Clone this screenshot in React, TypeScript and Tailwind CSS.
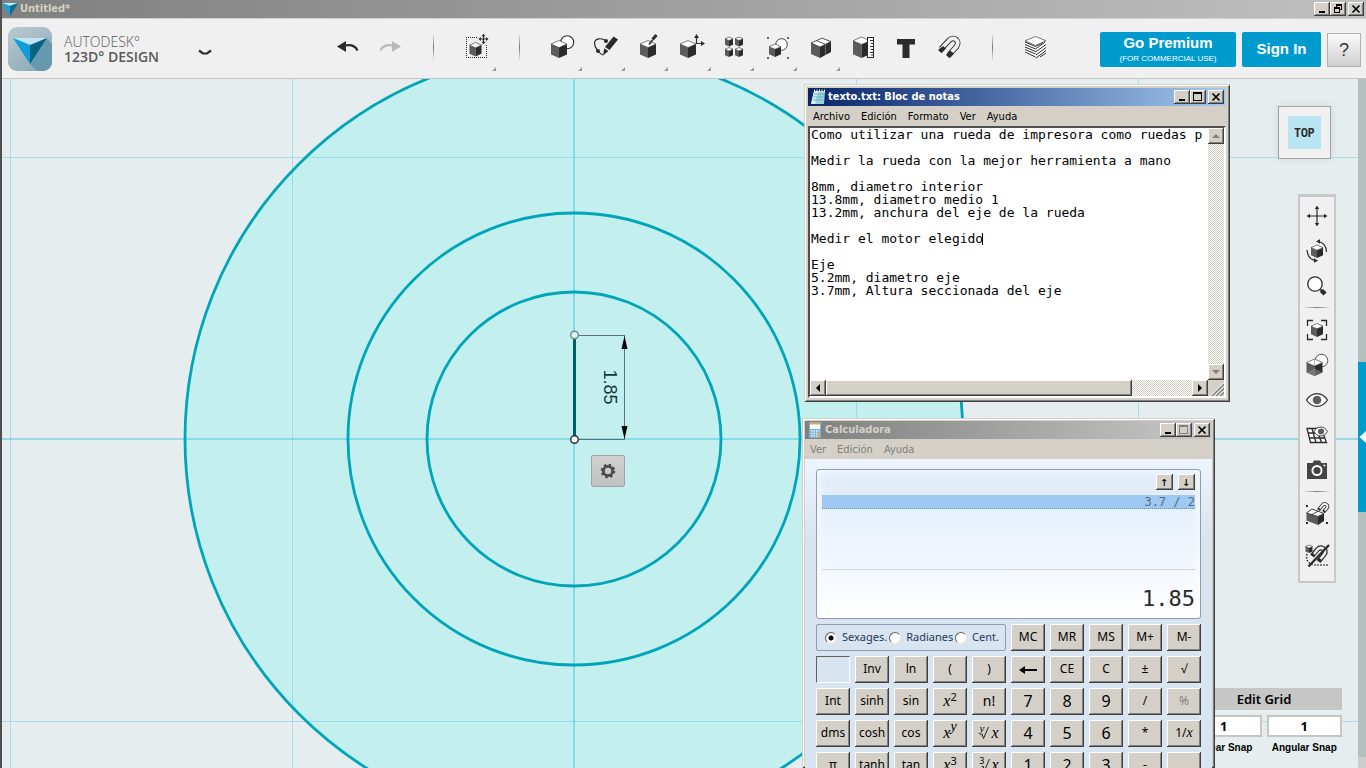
import React from "react";

const INK = "#2b2b2b";

/* ---------- drawing helpers ---------- */

function Cube({ x, y, w, h }: { x: number; y: number; w: number; h: number }) {
  const m = x + w / 2;
  const q = w * 0.22;
  const b = y + h;
  return (
    <g>
      <polygon points={`${x},${y + q} ${m},${y + 2 * q} ${m},${b} ${x},${b - q}`} fill="#5c5c5c" />
      <polygon points={`${x + w},${y + q} ${m},${y + 2 * q} ${m},${b} ${x + w},${b - q}`} fill={INK} />
      <polygon
        points={`${m},${y} ${x + w},${y + q} ${m},${y + 2 * q} ${x},${y + q}`}
        fill="#fff"
        stroke={INK}
        strokeWidth="0.6"
        strokeLinejoin="round"
      />
    </g>
  );
}

function Icon({ children }: { children: React.ReactNode }) {
  return (
    <svg width="33" height="32" viewBox="0 0 33 32" aria-hidden="true">
      {children}
    </svg>
  );
}

const SelectIcon = () => (
  <Icon>
    <path d="M6 6.500H18M6.500 8V27M8 26.500H27M26.500 14V26" stroke={INK} strokeWidth="1" strokeDasharray="1 1" fill="none" shapeRendering="crispEdges" />
    <Cube x={9.500} y={11.500} w={12} h={14} />
    <path d="M23.500 4.500V11.500M20 8H27" stroke={INK} strokeWidth="1.200" />
    <path d="M23.500 2.800l2 2.400h-4zM23.500 13.200l2-2.400h-4zM18.500 8l2.400-2v4zM28.500 8l-2.400-2v4z" fill={INK} />
  </Icon>
);

const PrimitivesIcon = () => (
  <Icon>
    <circle cx="21.200" cy="11.200" r="6.500" fill="#fff" stroke={INK} strokeWidth="1.100" />
    <Cube x={5} y={9.500} w={16} h={17.500} />
  </Icon>
);

const SketchIcon = () => (
  <Icon>
    <path d="M17 10C13 6.500 5.500 7 5.500 12.500C5.500 16 7.500 18 9 20C10.500 22 12 23.500 14 24" stroke={INK} strokeWidth="1.200" fill="none" />
    <circle cx="17" cy="10" r="2" fill={INK} />
    <circle cx="9" cy="20" r="2" fill={INK} />
    <path d="M24.500 5.500l4.500 3-8.500 10.500-4.500-3z" fill={INK} />
    <path d="M15.200 17.200l4.200 2.800-5.400 4.600z" fill={INK} />
  </Icon>
);

const ConstructIcon = () => (
  <Icon>
    <Cube x={8} y={9.500} w={16} h={17.500} />
    <path d="M20.500 8.500L24.500 4" stroke={INK} strokeWidth="3" />
    <path d="M17 13.500L20.500 9" stroke={INK} strokeWidth="1.600" />
  </Icon>
);

const TransformIcon = () => (
  <Icon>
    <Cube x={5} y={9.500} w={16} h={17.500} />
    <path d="M21.500 6V12.500H27" stroke={INK} strokeWidth="1.200" fill="none" />
    <path d="M21.500 3l2.500 4h-5zM30 12.500l-4-2.500v5z" fill={INK} />
  </Icon>
);

const PatternIcon = () => (
  <Icon>
    <Cube x={7} y={6} w={8} h={9.500} />
    <Cube x={17} y={6} w={8} h={9.500} />
    <Cube x={7} y={16.500} w={8} h={9.500} />
    <Cube x={17} y={16.500} w={8} h={9.500} />
  </Icon>
);

const GroupIcon = () => (
  <Icon>
    <path d="M6 6h2v2h-2zM26 6h2v2h-2zM6 26h2v2h-2zM26 26h2v2h-2z" fill="#666" />
    <circle cx="20.500" cy="13.500" r="5.800" fill="#fff" stroke={INK} strokeWidth="0.900" />
    <Cube x={8} y={13} w={12} h={13} />
  </Icon>
);

const CombineIcon = () => (
  <Icon>
    <polygon points="7,12 16,16 16,27 7,23" fill="#5c5c5c" />
    <polygon points="16,16 27,10.500 27,21 16,27" fill={INK} />
    <path d="M7 12L18 7.200L27 10.500L16 16Z" fill="#fff" stroke={INK} strokeWidth="0.800" />
    <path d="M12.500 9.700L21.500 13.300" stroke={INK} strokeWidth="0.800" />
    <path d="M21.500 13.200V24" stroke="#8a8a8a" strokeWidth="0.700" />
  </Icon>
);

const MeasureIcon = () => (
  <Icon>
    <Cube x={6} y={6} w={17} h={21} />
    <rect x="20.500" y="6.500" width="6" height="20" fill="#fff" stroke={INK} strokeWidth="1" />
    <path d="M23 9.500h3M24 12.500h2M23 15.500h3M24 18.500h2M23 21.500h3M24 24h2" stroke={INK} strokeWidth="1.200" />
  </Icon>
);

const TextIcon = () => (
  <Icon>
    <path d="M7 8h18v5.500h-5.500v13.500h-7v-13.500h-5.500z" fill={INK} />
  </Icon>
);

const MagnetIcon = () => (
  <Icon>
    <path d="M8 18L16.500 9C20.500 5 27.500 9.500 23.500 15.500L16 24" stroke={INK} strokeWidth="5.600" fill="none" />
    <path d="M8 18L16.500 9C20.500 5 27.500 9.500 23.500 15.500L16 24" stroke="#f0f0f0" strokeWidth="3.800" fill="none" />
    <path d="M10 15L5 19l3.500 3.200L13 17.500zM17 19.500L13 24l3.500 3.200L21 22.500z" fill={INK} />
  </Icon>
);

const LayersIcon = () => (
  <Icon>
    <path d="M6 10L16.500 14.500L27 10V22L16.500 27L6 22Z" fill="#fff" />
    <path
      d="M6 11L16.500 15.500M6 13.500L16.500 18M6 16L16.500 20.500M6 18.500L16.500 23M6 21L16.500 26M16.500 18L26 11M16.500 21L27 13.500M17 24L27 16.500M17 27L27 19.500M21 26L27 22M16.500 15.500L24 11.500"
      stroke={INK}
      strokeWidth="1"
      fill="none"
    />
    <path d="M16.500 5.500L27 9.800L16.500 14.500L6 9.800Z" fill="#fff" stroke="#555" strokeWidth="0.800" />
  </Icon>
);

const UndoIcon = ({ color }: { color: string }) => (
  <Icon>
    <path d="M6 15.500L15 10V21Z" fill={color} />
    <path d="M14 14.500C20 13.500 24.500 15 26.500 19.500" stroke={color} strokeWidth="2.200" fill="none" />
  </Icon>
);

const RedoIcon = ({ color }: { color: string }) => (
  <Icon>
    <path d="M27 15.500L18 10V21Z" fill={color} />
    <path d="M19 14.500C13 13.500 8.500 15 6.500 19.500" stroke={color} strokeWidth="2.200" fill="none" />
  </Icon>
);

/* ---------- navigation bar icons (26 x 26) ---------- */

function NavIcon({ children }: { children: React.ReactNode }) {
  return (
    <svg width="26" height="26" viewBox="0 0 26 26" aria-hidden="true">
      {children}
    </svg>
  );
}

const PanIcon = () => (
  <NavIcon>
    <path d="M13 4V22M4 13H22" stroke={INK} strokeWidth="1.200" />
    <path d="M13 2.500l2.200 3.500h-4.400zM13 23.500l2.200-3.500h-4.400zM2.500 13l3.500-2.200v4.400zM23.500 13l-3.500-2.200v4.400z" fill={INK} />
  </NavIcon>
);
const OrbitIcon = () => (
  <NavIcon>
    <Cube x={7} y={7} w={12} h={13} />
    <path d="M14 3.500C19 4 22.500 8 22.500 14M12 22.500C7 22 3.500 18 3 12" stroke={INK} strokeWidth="1.200" fill="none" />
    <path d="M12 3.200l4-2v4.500zM14 22.800l-4 2v-4.500z" fill={INK} />
  </NavIcon>
);
const ZoomIcon = () => (
  <NavIcon>
    <circle cx="11" cy="11" r="7.200" fill="#fff" stroke={INK} strokeWidth="1.300" />
    <path d="M16.500 16.500L18 18" stroke={INK} strokeWidth="2" />
    <path d="M17.500 17.500L21 21" stroke={INK} strokeWidth="4.500" />
  </NavIcon>
);
const FitIcon = () => (
  <NavIcon>
    <path d="M3.500 9V3.500H9M17 3.500H22.500V9M22.500 17V22.500H17M9 22.500H3.500V17" stroke={INK} strokeWidth="1.300" fill="none" />
    <Cube x={7} y={6.500} w={12} h={13.500} />
  </NavIcon>
);
const MaterialIcon = () => (
  <NavIcon>
    <circle cx="17.500" cy="8.500" r="6.300" fill="#fff" stroke={INK} strokeWidth="0.800" />
    <Cube x={2.500} y={7} w={16} h={17} />
    <path d="M2.500 20.500L10.500 16.500V24ZM10.500 16.500L18.500 20.500L10.500 24Z" fill="#8b8b8b" opacity="0.600" />
    <path d="M10.500 14V7.500" stroke="#999" strokeWidth="0.700" />
  </NavIcon>
);
const EyeIcon = () => (
  <NavIcon>
    <path d="M2.500 13C8 4.500 18 4.500 23.500 13C18 21.500 8 21.500 2.500 13Z" fill="#fff" stroke={INK} strokeWidth="1.200" />
    <circle cx="13" cy="13" r="4.300" fill="#5c5c5c" />
  </NavIcon>
);
const GridEyeIcon = () => (
  <NavIcon>
    <path d="M3 6.500H17L22.500 20.500H6.500Z" fill="#fff" stroke={INK} strokeWidth="1.300" />
    <path d="M4 11H19M5.500 16H21M8 6.500L12 20.500M12.500 6.500L17.500 20.500" stroke={INK} strokeWidth="1.300" />
    <path d="M10 9.500C13 3.500 20 3.500 23.500 9.500C20 15.500 13 15.500 10 9.500Z" fill="#fff" stroke={INK} strokeWidth="0.900" />
    <circle cx="17" cy="9.500" r="3" fill="#5c5c5c" />
  </NavIcon>
);
const CameraIcon = () => (
  <NavIcon>
    <path d="M3 6H8.500L10 3.500H16L17.500 6H23V22H3Z" fill="#444" />
    <circle cx="13" cy="13.500" r="5.500" fill="#fff" />
    <circle cx="13" cy="13.500" r="3.600" fill="#444" />
    <circle cx="20.500" cy="8.500" r="1" fill="#fff" />
  </NavIcon>
);
const SnapIcon = () => (
  <NavIcon>
    <path d="M2 4h2v2h-2zM2 21h2v2h-2zM22 21h2v2h-2z" fill={INK} />
    <polygon points="2.500,12 14,15.500 14,24 2.500,19.500" fill="#5c5c5c" />
    <polygon points="14,15.500 20,12.500 20,20 14,24" fill={INK} />
    <path d="M2.500 12L8 8L20 12.500L14 15.500Z" fill="#fff" stroke={INK} strokeWidth="0.900" />
    <path d="M8 13.500L14 10.200" stroke={INK} strokeWidth="0.900" />
    <path d="M14.500 9L18.500 4C20.500 1.500 25 4 23 7L19.500 11" stroke={INK} strokeWidth="3.600" fill="none" />
    <path d="M15.700 7.500L18.500 4C20.500 1.500 25 4 23 7L20.700 9.700" stroke="#f0f0f0" strokeWidth="2" fill="none" />
  </NavIcon>
);
const SnapOffIcon = () => (
  <NavIcon>
    <Cube x={1.500} y={2} w={7} h={8} />
    <path d="M3 11C1 18 6 22 12 22H24" stroke={INK} strokeWidth="1.500" strokeDasharray="1.500 1.500" fill="none" />
    <path d="M8 13L13.500 6.500C17 3 23 6 20.500 11L14.500 18.500" stroke={INK} strokeWidth="5" fill="none" />
    <path d="M10 11L13.500 6.500C17 3 23 6 20.500 11L16.500 16" stroke="#f0f0f0" strokeWidth="2.600" fill="none" />
    <path d="M4.500 23.500L25 2" stroke={INK} strokeWidth="2.400" />
  </NavIcon>
);

/* ---------- classic window chrome ---------- */

const RAISED =
  "bg-[#d4d0c8] shadow-[inset_-1px_-1px_0_#404040,inset_1px_1px_0_#ffffff,inset_-2px_-2px_0_#808080]";

function CaptionButtons({ middle, dim = false }: { middle: "max" | "restore"; dim?: boolean }) {
  const c = "flex h-[14px] w-4 items-center justify-center " + RAISED;
  return (
    <div className="flex shrink-0">
      <button aria-label="Minimizar" className={c}>
        <svg width="12" height="10" viewBox="0 0 12 10"><path d="M3 7h6v2H3z" fill="#000" /></svg>
      </button>
      <button aria-label="Maximizar" className={c}>
        {middle === "max" ? (
          <svg width="12" height="10" viewBox="0 0 12 10">
            <path d="M1 0h9v9H1zM2 2v6h7V2z" fillRule="evenodd" fill={dim ? "#808080" : "#000"} />
          </svg>
        ) : (
          <svg width="12" height="10" viewBox="0 0 12 10">
            <path d="M4 0h6v6H8V9H2V3h2zM5 2v1h3v2h1V2zM3 5v3h4V5z" fillRule="evenodd" fill="#000" />
          </svg>
        )}
      </button>
      <button aria-label="Cerrar" className={c + " ml-[2px]"}>
        <svg width="12" height="10" viewBox="0 0 12 10"><path d="M2.500 1.500l7 7M9.500 1.500l-7 7" stroke="#000" strokeWidth="1.700" /></svg>
      </button>
    </div>
  );
}

const FRAME =
  "bg-[#d4d0c8] shadow-[inset_1px_1px_0_#d4d0c8,inset_-1px_-1px_0_#404040,inset_2px_2px_0_#ffffff,inset_-2px_-2px_0_#808080]";

/* ---------- application header ---------- */

function BrandMark({ size }: { size: "sm" | "lg" }) {
  if (size === "sm") {
    return (
      <svg width="16" height="14" viewBox="0 0 16 14" aria-hidden="true">
        <path d="M0 1H16L8 4Z" fill="#c3e9f7" />
        <path d="M0 1L8 4V14Z" fill="#12a5dc" />
        <path d="M16 1L8 4V14Z" fill="#0a6c96" />
      </svg>
    );
  }
  return (
    <svg width="44" height="44" viewBox="0 0 44 44" aria-hidden="true">
      <defs>
        <linearGradient id="brand" x1="0" y1="0" x2="0.600" y2="1">
          <stop offset="0" stopColor="#bccad2" />
          <stop offset="1" stopColor="#8fabba" />
        </linearGradient>
      </defs>
      <rect width="44" height="44" rx="9" fill="url(#brand)" />
      <path d="M38.500 11L44 17V35A9 9 0 0 1 35 44H29L22 37Z" fill="#6499ae" />
      <path d="M5 11H39L22 18Z" fill="#bfe8f7" />
      <path d="M5 11L22 18V37Z" fill="#0d9fd8" />
      <path d="M39 11L22 18V37Z" fill="#0a6283" />
    </svg>
  );
}

const tools = [
  { name: "Primitives", icon: <PrimitivesIcon />, more: true },
  { name: "Sketch", icon: <SketchIcon />, more: true },
  { name: "Construct", icon: <ConstructIcon />, more: true },
  { name: "Modify", icon: <TransformIcon />, more: true },
  { name: "Pattern", icon: <PatternIcon />, more: true },
  { name: "Grouping", icon: <GroupIcon />, more: true },
  { name: "Combine", icon: <CombineIcon />, more: true },
  { name: "Measure", icon: <MeasureIcon />, more: false },
  { name: "Text", icon: <TextIcon />, more: false },
  { name: "Snap", icon: <MagnetIcon />, more: false },
];

function Tool({ name, more = false, children }: { name: string; more?: boolean; children: React.ReactNode }) {
  return (
    <button aria-label={name} className="relative flex h-14 w-[43px] shrink-0 items-center justify-center self-start">
      {children}
      {more && (
        <svg className="absolute bottom-1 right-[2px]" width="4" height="4" viewBox="0 0 4 4" aria-hidden="true">
          <path d="M4 0V4H0Z" fill="#999" />
        </svg>
      )}
    </button>
  );
}

const Divider = () => (
  <div className="flex h-14 w-[43px] shrink-0 items-center justify-center self-start">
    <div className="h-7 w-px bg-linear-to-b from-transparent via-[#777] to-transparent" />
  </div>
);

function Header() {
  return (
    <header className="shrink-0">
      <div className="flex h-[18px] items-center gap-[2px] bg-linear-to-r from-[#808080] to-[#c0c0c0] pr-[2px]">
        <BrandMark size="sm" />
        <h1 className="grow font-['DejaVu_Sans_Condensed','DejaVu_Sans',sans-serif] text-[11px] font-bold leading-4 text-[#d4d0c8]">
          Untitled*
        </h1>
        <CaptionButtons middle="restore" />
      </div>
      <div className="flex h-[61px] items-center border-b border-t border-b-[#c4c4c4] border-t-[#d4d0c8] bg-[#f0f0f0]">
        <div className="flex w-[324px] shrink-0 items-center pl-[6px]">
          <BrandMark size="lg" />
          <div className="ml-3 w-[120px] font-['Open_Sans','Noto_Sans',sans-serif] text-[14px] leading-[15px] text-[#5a5a5a]">
            <div className="font-light">AUTODESK°</div>
            <div className="font-semibold">123D° DESIGN</div>
          </div>
          <button aria-label="Menu" className="ml-[9px] flex h-6 w-6 items-center justify-center pt-2">
            <svg width="14" height="7" viewBox="0 0 14 7"><path d="M1 1.500L5 4.500H9L13 1.500" stroke={INK} strokeWidth="2.200" fill="none" /></svg>
          </button>
        </div>
        <Tool name="Undo"><UndoIcon color={INK} /></Tool>
        <Tool name="Redo"><RedoIcon color="#b8b8b8" /></Tool>
        <Divider />
        <Tool name="Select" more><SelectIcon /></Tool>
        <Divider />
        {tools.map((t) => (
          <Tool key={t.name} name={t.name} more={t.more}>{t.icon}</Tool>
        ))}
        <Divider />
        <Tool name="Layers"><LayersIcon /></Tool>
        <div className="ml-auto flex items-center gap-[6px] pr-[5px] pt-[2px] font-['Liberation_Sans',Arial,sans-serif] text-white">
          <button className="flex h-[35px] w-[136px] flex-col items-center justify-center gap-[2px] rounded-[2px] bg-[#009bcd]">
            <span className="text-[15px] font-bold leading-4">Go Premium</span>
            <span className="text-[8px] leading-3">(FOR COMMERCIAL USE)</span>
          </button>
          <button className="h-[35px] w-[79px] rounded-[2px] bg-[#009bcd] text-[15px] font-bold">Sign In</button>
          <button aria-label="Help" className="h-[34px] w-[34px] border border-[#b0b0b0] bg-linear-to-b from-[#fafafa] to-[#cfcfcf] text-[18px] leading-6 text-[#333]">
            ?
          </button>
        </div>
      </div>
    </header>
  );
}

/* ---------- sketch canvas ---------- */

function Sketch() {
  const cx = 572;
  const cy = 360;
  return (
    <svg className="absolute inset-0 h-full w-full" aria-label="Sketch">
      <circle cx={cx} cy={cy} r="389" fill="#c3efef" />
      <g stroke="#3cbfe0" strokeWidth="1" opacity="0.350" shapeRendering="crispEdges">
        {[8.5, 290.5, 854.5, 1136.5].map((x) => <line key={x} x1={x} x2={x} y1="0" y2="100%" />)}
        {[78.5, 642.5].map((y) => <line key={y} x1="0" x2="100%" y1={y} y2={y} />)}
      </g>
      <g stroke="#3cc4e0" strokeWidth="1.500" opacity="0.600">
        <line x1={cx} x2={cx} y1="0" y2="100%" />
        <line x1="0" x2="100%" y1={cy} y2={cy} />
      </g>
      {[389, 226, 147].map((r) => (
        <circle key={r} cx={cx} cy={cy} r={r} fill="none" stroke="#00a5b8" strokeWidth="2.800" />
      ))}
      <g stroke="#5c7274" strokeWidth="1" shapeRendering="crispEdges">
        <path d="M576 256.500H623M576 360.500H623M622.500 257V360" />
      </g>
      <path d="M622.500 257l3 13h-6zM622.500 360l3-13h-6z" fill="#000" />
      <path d={`M${cx + 0.5} 258V358`} stroke="#005f69" strokeWidth="3" />
      <circle cx={cx + 0.5} cy="256" r="3.800" fill="#dff6f6" stroke="#6f8c8e" strokeWidth="1.500" />
      <circle cx={cx + 0.5} cy="360.500" r="3.800" fill="#fff" stroke="#333" strokeWidth="1.500" />
      <text
        transform="translate(602 308) rotate(90)"
        textAnchor="middle"
        className="font-['Liberation_Sans',Arial,sans-serif] text-[18px]"
        fill="#12383c"
      >
        1.85
      </text>
    </svg>
  );
}

const NavRule = () => <div className="my-1 h-px w-7 bg-linear-to-r from-transparent via-[#777] to-transparent" />;

function NavButton({ name, children }: { name: string; children: React.ReactNode }) {
  return <button aria-label={name} className="flex h-[35px] items-center">{children}</button>;
}

function NavBar() {
  return (
    <nav className="absolute right-[22px] top-[115px] flex w-[38px] flex-col items-center border-2 border-t-[3px] border-[#c8c8c8] bg-[#f0f0f0] pb-2 pt-[1px]">
      <NavButton name="Pan"><PanIcon /></NavButton>
      <NavButton name="Orbit"><OrbitIcon /></NavButton>
      <NavButton name="Zoom"><ZoomIcon /></NavButton>
      <NavRule />
      <NavButton name="Fit"><FitIcon /></NavButton>
      <NavButton name="Materials"><MaterialIcon /></NavButton>
      <NavButton name="Visibility"><EyeIcon /></NavButton>
      <NavButton name="Grid visibility"><GridEyeIcon /></NavButton>
      <NavButton name="Screenshot"><CameraIcon /></NavButton>
      <NavRule />
      <div className="flex flex-col gap-[7px]">
        <NavButton name="Group snap"><SnapIcon /></NavButton>
        <NavButton name="Snap off"><SnapOffIcon /></NavButton>
      </div>
    </nav>
  );
}

function GridPanel() {
  const field = "h-[22px] w-full border-2 border-[#c6c6c6] bg-white text-center text-[13px] font-bold leading-4 text-black";
  const label = "flex flex-col items-center gap-[5px] text-[13px] text-black";
  const caption = "whitespace-nowrap font-['Liberation_Sans',sans-serif] text-[10px] font-bold leading-3";
  return (
    <section className="absolute bottom-[14px] right-4 w-[156px] font-['Noto_Sans','Open_Sans',sans-serif]">
      <button className="mb-[5px] block h-[22px] w-full bg-[#c6c6c6] text-[13px] font-semibold leading-5 text-black">Edit Grid</button>
      <div className="grid grid-cols-2 gap-[5px]">
        <label className={label}>
          <input className={field} defaultValue="1" />
          <span className={caption}>Linear Snap</span>
        </label>
        <label className={label}>
          <input className={field} defaultValue="1" />
          <span className={caption}>Angular Snap</span>
        </label>
      </div>
    </section>
  );
}

/* ---------- notepad ---------- */

const note = `Como utilizar una rueda de impresora como ruedas p

Medir la rueda con la mejor herramienta a mano

8mm, diametro interior
13.8mm, diametro medio 1
13.2mm, anchura del eje de la rueda

Medir el motor elegido

Eje
5.2mm, diametro eje
3.7mm, Altura seccionada del eje`;

const CHECK = "bg-[repeating-conic-gradient(#ffffff_0_25%,#d4d0c8_0_50%)] bg-[length:2px_2px]";

function ScrollArrow({ name, d, color }: { name: string; d: string; color: string }) {
  return (
    <button aria-label={name} className={"flex h-4 w-4 shrink-0 items-center justify-center " + RAISED}>
      <svg width="8" height="8" viewBox="0 0 8 8"><path d={d} fill={color} /></svg>
    </button>
  );
}

function Menu({ items, className }: { items: string[]; className: string }) {
  return (
    <div className={"flex gap-[11px] font-['DejaVu_Sans_Condensed','DejaVu_Sans',sans-serif] text-[11px] leading-[18px] " + className}>
      {items.map((i) => <button key={i}>{i}</button>)}
    </div>
  );
}

function Notepad() {
  return (
    <section className={"absolute left-[802px] top-[5px] flex h-[318px] w-[426px] flex-col p-1 " + FRAME}>
      <div className="flex h-[18px] shrink-0 items-center gap-[2px] bg-linear-to-r from-[#0a246a] to-[#a6caf0] pl-[3px] pr-[2px]">
        <svg width="15" height="16" viewBox="0 0 15 16" aria-hidden="true">
          <path d="M3 2H14L13 15H0Z" fill="#9fd3dc" />
          <path d="M3 2H7L4 15H0Z" fill="#d9f1f4" />
          <path d="M3 5h10M2.500 8h10M2 11h10" stroke="#5ba7b5" strokeWidth="0.800" />
          <path d="M3.500 0.500v2.500M6 0.500v2.500M8.500 0.500v2.500M11 0.500v2.500M13.500 0.500v2.500" stroke="#eee" strokeWidth="1" />
        </svg>
        <h2 className="grow font-['DejaVu_Sans_Condensed','DejaVu_Sans',sans-serif] text-[11px] font-bold leading-4 text-white">
          texto.txt: Bloc de notas
        </h2>
        <CaptionButtons middle="max" />
      </div>
      <Menu items={["Archivo", "Edición", "Formato", "Ver", "Ayuda"]} className="h-5 pl-[5px] pt-px text-black" />
      <div className="flex min-h-0 grow flex-col border-2 border-b-white border-l-[#505050] border-r-white border-t-[#505050] bg-white">
        <div className="flex min-h-0 grow">
          <div className="relative min-w-0 grow pl-px font-['DejaVu_Sans_Mono','Liberation_Mono',monospace] text-[13px] leading-[13px]">
            <textarea
              aria-label="Texto"
              wrap="off"
              spellCheck={false}
              defaultValue={note}
              className="block h-full w-full resize-none overflow-hidden whitespace-pre text-black outline-none"
            />
            <span className="absolute left-[22ch] top-[105px] h-3 w-px bg-black" />
          </div>
          <div className={"flex w-4 flex-col justify-between " + CHECK}>
            <ScrollArrow name="Arriba" d="M0 6L4 2L8 6Z" color="#808080" />
            <ScrollArrow name="Abajo" d="M0 2L4 6L8 2Z" color="#808080" />
          </div>
        </div>
        <div className="flex h-4 shrink-0">
          <div className={"flex grow " + CHECK}>
            <ScrollArrow name="Izquierda" d="M6 0L2 4L6 8Z" color="#000" />
            <div className={"w-[306px] " + RAISED} />
            <div className="grow" />
            <ScrollArrow name="Derecha" d="M2 0L6 4L2 8Z" color="#000" />
          </div>
          <svg className="bg-[#d4d0c8]" width="16" height="16" viewBox="0 0 16 16" aria-hidden="true">
            <path d="M4 16L16 4M8 16L16 8M12 16L16 12" stroke="#808080" strokeWidth="1.600" />
            <path d="M3 15.500L15.500 3M7 15.500L15.500 7M11 15.500L15.500 11" stroke="#fff" strokeWidth="0.900" />
          </svg>
        </div>
      </div>
    </section>
  );
}

/* ---------- calculator ---------- */

const MATH = "font-['Liberation_Serif',serif] text-[16px] italic leading-4";

function Power({ exp, italic = false }: { exp: string; italic?: boolean }) {
  return (
    <span className={MATH}>
      x<sup className={italic ? "text-[14px]" : "font-['Noto_Sans',sans-serif] text-[11px] not-italic"}>{exp}</sup>
    </span>
  );
}

function Root({ index, italic = false }: { index: string; italic?: boolean }) {
  return (
    <span className={MATH + " flex items-center"}>
      <sup className={"-mr-1 " + (italic ? "text-[11px]" : "font-['Noto_Sans',sans-serif] text-[9px] not-italic")}>{index}</sup>
      <svg className="mr-[2px]" width="9" height="14" viewBox="0 0 9 14" aria-hidden="true">
        <path d="M0.500 9L2 8L3.500 12.500L8.500 1" stroke="#222" strokeWidth="1" fill="none" />
      </svg>
      x
    </span>
  );
}

const Big = ({ n }: { n: string }) => <span className="text-[16px]">{n}</span>;

const rows: { id: string; face: React.ReactNode }[][] = [
  [
    { id: "Inv", face: "Inv" },
    { id: "ln", face: "ln" },
    { id: "(", face: "(" },
    { id: ")", face: ")" },
    {
      id: "back",
      face: (
        <svg width="18" height="9" viewBox="0 0 18 9" aria-label="Retroceso">
          <path d="M0 5L6 1V9Z" fill="#000" />
          <path d="M4 5H18" stroke="#000" strokeWidth="2" />
        </svg>
      ),
    },
    { id: "CE", face: "CE" },
    { id: "C", face: "C" },
    { id: "±", face: "±" },
    { id: "√", face: "√" },
  ],
  [
    { id: "Int", face: "Int" },
    { id: "sinh", face: "sinh" },
    { id: "sin", face: "sin" },
    { id: "x2", face: <Power exp="2" /> },
    { id: "n!", face: <span className="text-[14px]">n!</span> },
    { id: "7", face: <Big n="7" /> },
    { id: "8", face: <Big n="8" /> },
    { id: "9", face: <Big n="9" /> },
    { id: "/", face: "/" },
    { id: "%", face: <span className="text-[#808080]">%</span> },
  ],
  [
    { id: "dms", face: "dms" },
    { id: "cosh", face: "cosh" },
    { id: "cos", face: "cos" },
    { id: "xy", face: <Power exp="y" italic /> },
    { id: "yroot", face: <Root index="y" italic /> },
    { id: "4", face: <Big n="4" /> },
    { id: "5", face: <Big n="5" /> },
    { id: "6", face: <Big n="6" /> },
    { id: "*", face: "*" },
    { id: "1/x", face: <span>1/<i className="font-['Liberation_Serif',serif] text-[14px]">x</i></span> },
  ],
  [
    { id: "pi", face: "π" },
    { id: "tanh", face: "tanh" },
    { id: "tan", face: "tan" },
    { id: "x3", face: <Power exp="3" /> },
    { id: "cbrt", face: <Root index="3" /> },
    { id: "1", face: <Big n="1" /> },
    { id: "2", face: <Big n="2" /> },
    { id: "3", face: <Big n="3" /> },
    { id: "-", face: "-" },
  ],
];

const KEY = "flex h-[27px] w-full items-center justify-center pb-px text-[12px] leading-4 text-black " + RAISED;

function Angle({ name, checked = false }: { name: string; checked?: boolean }) {
  return (
    <label className="flex items-center gap-[5px]">
      <input
        type="radio"
        name="angle"
        defaultChecked={checked}
        className="h-3 w-3 appearance-none rounded-full border border-b-[#e8e4dc] border-l-[#606060] border-r-[#e8e4dc] border-t-[#606060] bg-white checked:bg-[radial-gradient(#000_0_2px,#fff_3px)]"
      />
      {name}
    </label>
  );
}

function Calculator() {
  return (
    <section className={"absolute bottom-0 left-[800px] top-[339px] flex w-[413px] flex-col overflow-hidden px-[3px] pt-[3px] " + FRAME}>
      <div className="flex h-[18px] shrink-0 items-center gap-1 bg-linear-to-r from-[#808080] to-[#c8c8c8] pl-1 pr-[2px]">
        <svg width="12" height="16" viewBox="0 0 12 16" aria-hidden="true">
          <rect width="12" height="16" rx="1" fill="#7db4dc" />
          <rect x="1" y="1" width="10" height="6" fill="#fff" />
          <rect x="1" y="1" width="10" height="1.500" fill="#f0a030" />
          <path d="M2 9h8M2 11.500h8M2 14h8" stroke="#e4f2fb" strokeWidth="1.500" strokeDasharray="1.500 1" />
          <path d="M9 11h2v4h-2z" fill="#f0a030" />
        </svg>
        <h2 className="grow font-['DejaVu_Sans_Condensed','DejaVu_Sans',sans-serif] text-[11px] font-bold leading-4 text-[#d4d0c8]">
          Calculadora
        </h2>
        <CaptionButtons middle="max" dim />
      </div>
      <Menu items={["Ver", "Edición", "Ayuda"]} className="h-5 shrink-0 pl-[5px] pt-px text-[#808080]" />
      <div className="grow bg-linear-to-b from-[#edf4fd] to-[#d9e4f1] to-[80px] px-[11px] pt-[10px] font-['Noto_Sans','Open_Sans',sans-serif]">
        <div className="flex h-[150px] flex-col rounded-[3px] border border-[#8e9cb5] bg-linear-to-b from-[#dfebf8] via-[#edf4fd] via-50% to-white px-[5px] font-['DejaVu_Sans_Mono',monospace] shadow-[inset_0_0_12px_#ffffff]">
          <div className="flex justify-end gap-[5px] pt-1">
            <button className={"h-4 w-[17px] text-[13px] leading-3 text-black " + RAISED}>↑</button>
            <button className={"h-4 w-[17px] text-[13px] leading-3 text-black " + RAISED}>↓</button>
          </div>
          <div className="mt-[5px] h-[14px] border-b border-dotted border-[#5f98bd] bg-[#9dc9f3] text-right text-[12px] leading-[14px] text-[#5c6b78]">
            3.7 / 2
          </div>
          <div className="mt-[60px] border-t border-[#c9d5e3] pt-[17px] text-right text-[22px] leading-6 text-[#2b2b2b]">1.85</div>
        </div>
        <div className="mt-[5px] grid grid-cols-10 gap-[5px]">
          <fieldset className="col-span-5 flex h-[27px] items-center justify-between rounded-[2px] border border-[#8e9cb5] pl-2 pr-[6px] text-[11px] text-[#1e395b]">
            <Angle name="Sexages." checked />
            <Angle name="Radianes" />
            <Angle name="Cent." />
          </fieldset>
          {["MC", "MR", "MS", "M+", "M-"].map((k) => <button key={k} className={KEY}>{k}</button>)}
          <div className="h-[27px] border border-b-white border-l-[#606060] border-r-white border-t-[#606060]" />
          {rows.flat().map((k) => <button key={k.id} className={KEY}>{k.face}</button>)}
          <button aria-label="Igual" className={"row-span-2 h-[59px] " + RAISED} />
        </div>
      </div>
    </section>
  );
}

/* ---------- page ---------- */

export default function App() {
  return (
    <div className="flex h-screen flex-col overflow-hidden border-l-2 border-[#505050] bg-[#e5edee]">
      <Header />
      <main className="flex min-h-0 grow">
        <div className="relative min-w-0 grow overflow-hidden">
          <Sketch />
          <button
            aria-label="Options"
            className="absolute left-[589px] top-[376px] flex h-8 w-[34px] items-center justify-center rounded-[2px] border border-[#a3a3a3] bg-linear-to-b from-[#d0d0d0] to-[#c2c2c2]"
          >
            <svg width="16" height="16" viewBox="0 0 16 16" aria-hidden="true">
              <circle cx="8" cy="8" r="4.600" fill="none" stroke="#4a4a4a" strokeWidth="2.800" />
              <circle cx="8" cy="8" r="6.300" fill="none" stroke="#4a4a4a" strokeWidth="2" strokeDasharray="2.470 2.470" />
            </svg>
          </button>
          <button className="absolute right-[27px] top-[27px] flex h-[53px] w-[53px] items-center justify-center border border-[#a3a3a3] bg-[#f0f0f0] shadow-[0_0_8px_#00000018]">
            <span className="flex h-[33px] w-[33px] items-center justify-center bg-[#b9e5f3] font-['Roboto_Condensed','Open_Sans_Condensed','Noto_Sans_CJK_SC',sans-serif] text-[12px] font-bold leading-4 text-[#2b2b2b]">
              TOP
            </span>
          </button>
          <NavBar />
          <GridPanel />
          <Notepad />
          <Calculator />
        </div>
        <aside className="flex w-2 shrink-0 flex-col bg-[#b5bfbe] pt-[283px]">
          <button aria-label="Expand" className="flex h-[150px] w-full items-center justify-end bg-[#009bcd]">
            <svg width="7" height="12" viewBox="0 0 7 12"><path d="M7 0V12L0.500 6Z" fill="#fff" /></svg>
          </button>
          <div className="mt-auto h-[11px] bg-[#cdcdcd]" />
        </aside>
      </main>
    </div>
  );
}
